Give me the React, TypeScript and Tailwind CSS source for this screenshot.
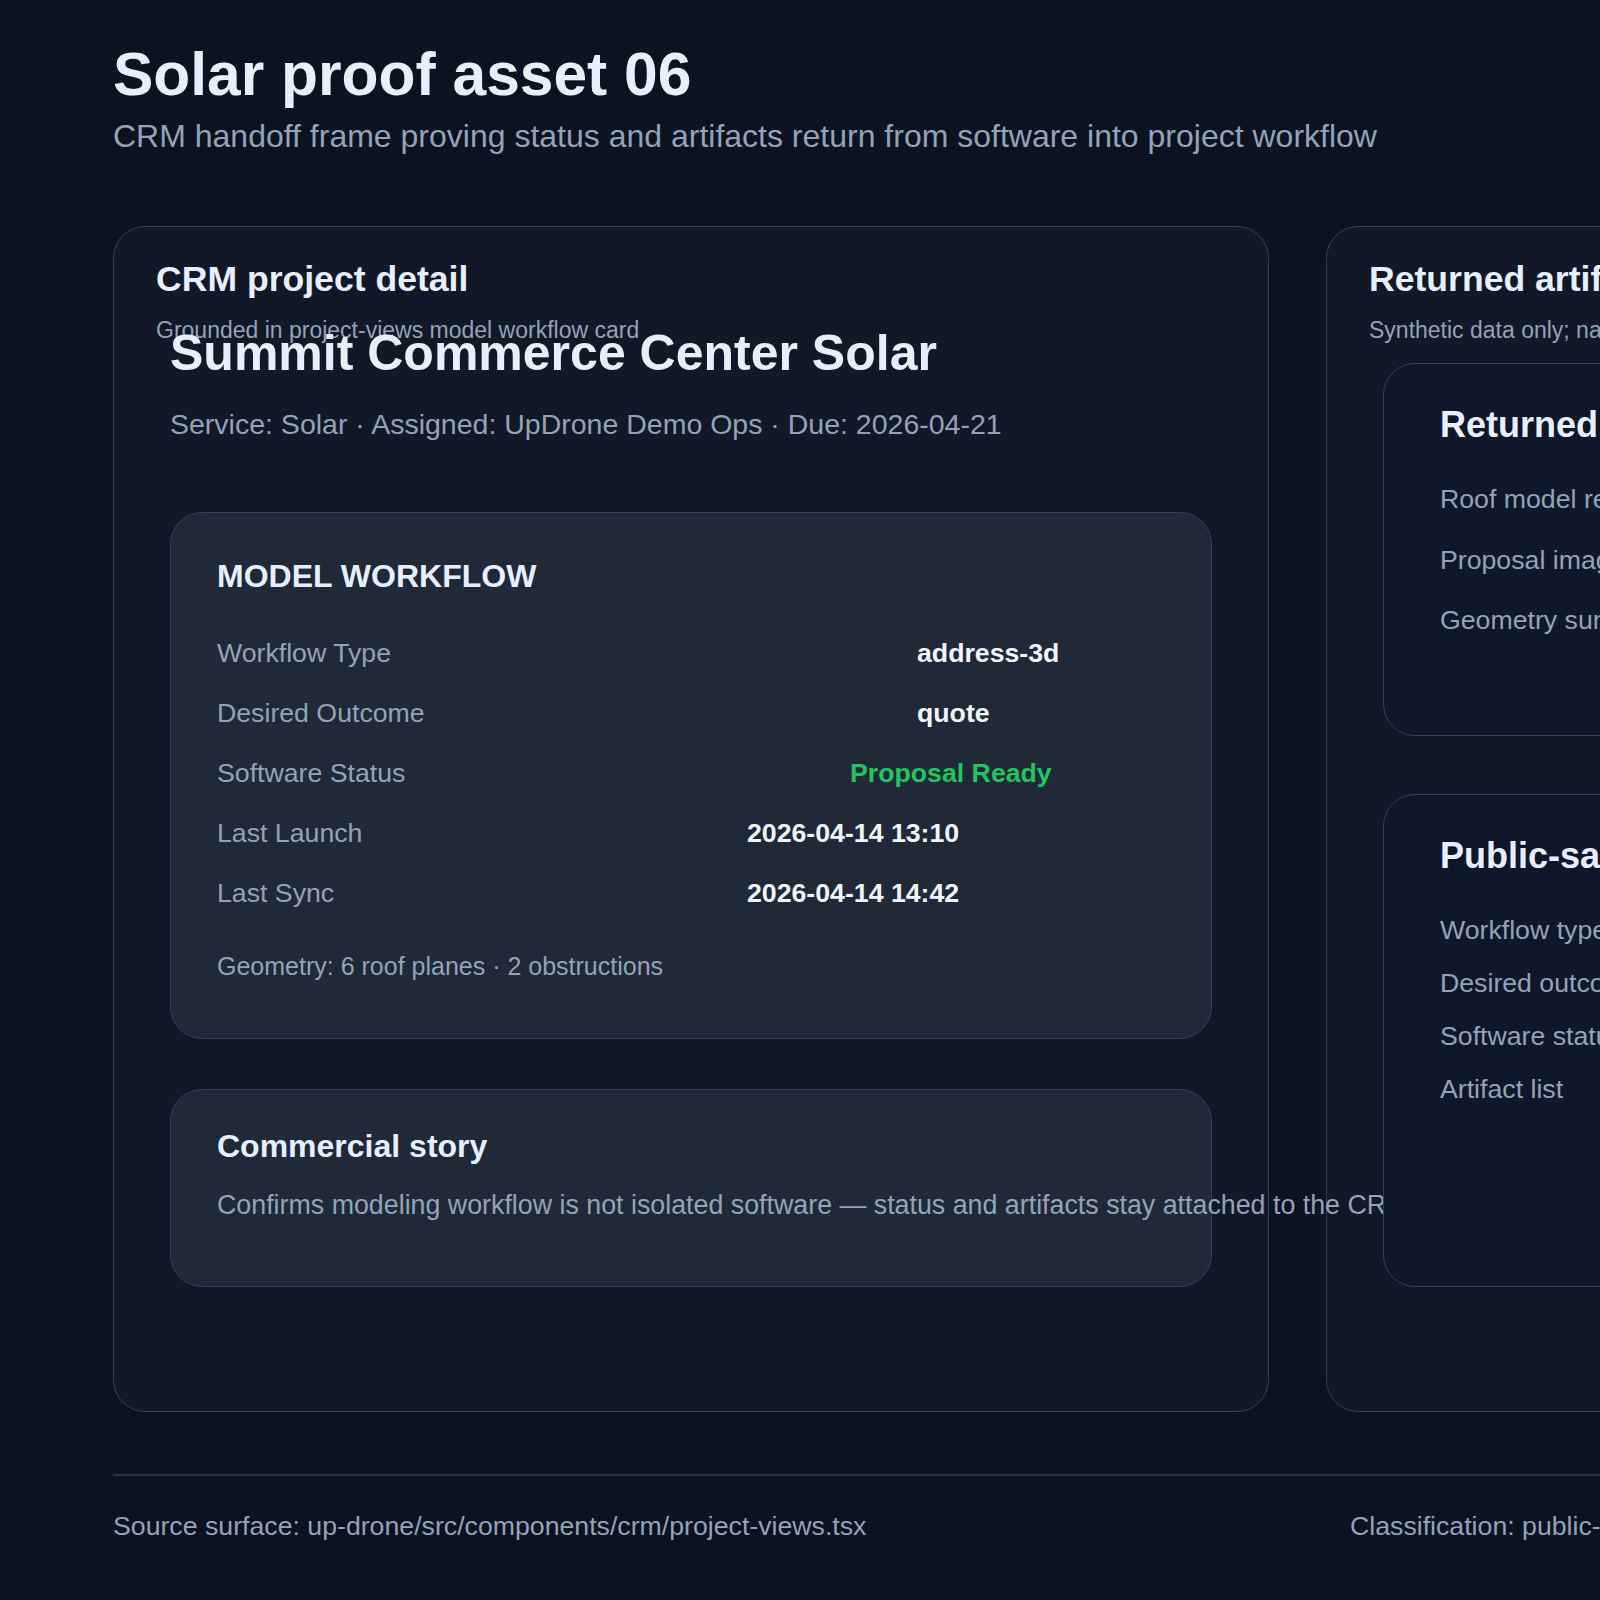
const rows = [
  { label: "Workflow Type", value: "address-3d", labelWidth: "w-[700px]", tone: "text-[#f1f5f9]" },
  { label: "Desired Outcome", value: "quote", labelWidth: "w-[700px]", tone: "text-[#f1f5f9]" },
  { label: "Software Status", value: "Proposal Ready", labelWidth: "w-[633px]", tone: "text-[#22c55e]" },
  { label: "Last Launch", value: "2026-04-14 13:10", labelWidth: "w-[530px]", tone: "text-[#f1f5f9]" },
  { label: "Last Sync", value: "2026-04-14 14:42", labelWidth: "w-[530px]", tone: "text-[#f1f5f9]" },
];

const returnedArtifacts = ["Roof model report", "Proposal imagery", "Geometry summary"];
const publicFields = ["Workflow type", "Desired outcome", "Software status", "Artifact list"];

function CardHeader({ title, note }: { title: string; note: string }) {
  return (
    <div className="px-[42px] pt-[30px]">
      <h2 className="whitespace-nowrap text-[35.6px] font-bold leading-[44px] text-[#e8effc]">{title}</h2>
      <p className="mt-[15px] whitespace-nowrap text-[23px] leading-[28px] text-[#94a3b8]">{note}</p>
    </div>
  );
}

export default function App() {
  return (
    <div className="h-[1600px] w-full overflow-hidden bg-[#0b1220] font-['Liberation_Sans',Arial,sans-serif]">
      <div className="w-[1920px] px-[113px] pt-[44px]">
        <h1 className="text-[60.5px] font-bold leading-[60px] text-[#e8effc]">Solar proof asset 06</h1>
        <p className="mt-[13px] text-[32px] leading-[38px] text-[#94a3b8]">
          CRM handoff frame proving status and artifacts return from software into project workflow
        </p>

        <div className="mt-[71px] grid grid-cols-[1156px_482px] gap-x-[57px]">
          {/* left: crm project detail */}
          <section className="flex flex-col rounded-[32px] border border-[#334155] bg-[#111827]">
            <CardHeader title="CRM project detail" note="Grounded in project-views model workflow card" />
            <div className="-mt-[21px] px-[56px] pb-[124px]">
              <h3 className="whitespace-nowrap text-[50px] font-bold leading-[60px] text-[#e8effc]">
                Summit Commerce Center Solar
              </h3>
              <p className="mt-[23px] whitespace-nowrap text-[28.5px] leading-[36px] text-[#94a3b8]">
                Service: Solar · Assigned: UpDrone Demo Ops · Due: 2026-04-21
              </p>

              <div className="mt-[70px] rounded-[32px] border border-[#334155] bg-[#1f2937] px-[46px] pb-[56px] pt-[44px]">
                <h4 className="text-[32px] font-bold leading-[38px] text-[#e8effc]">MODEL WORKFLOW</h4>
                <div className="mt-[28px]">
                  {rows.map((row) => (
                    <div key={row.label} className="flex text-[26.7px] leading-[60px]">
                      <span className={`${row.labelWidth} shrink-0 text-[#94a3b8]`}>{row.label}</span>
                      <span className={`font-bold ${row.tone}`}>{row.value}</span>
                    </div>
                  ))}
                </div>
                <p className="mt-[27px] text-[25px] leading-[32px] text-[#94a3b8]">
                  Geometry: 6 roof planes · 2 obstructions
                </p>
              </div>

              <div className="mt-[50px] rounded-[32px] border border-[#334155] bg-[#1f2937] px-[46px] pb-[63px] pt-[37px]">
                <h4 className="text-[32px] font-bold leading-[38px] text-[#e8effc]">Commercial story</h4>
                <p className="relative mt-[22px] whitespace-nowrap text-[26.8px] leading-[36px] text-[#94a3b8]">
                  Confirms modeling workflow is not isolated software — status and artifacts stay attached to the CRM
                  project record.
                </p>
              </div>
            </div>
          </section>

          {/* right: returned artifacts */}
          <section className="flex flex-col rounded-[32px] border border-[#334155] bg-[#111827]">
            <CardHeader
              title="Returned artifacts"
              note="Synthetic data only; names, addresses and figures are fictional"
            />
            <div className="mt-[19px] flex flex-1 flex-col gap-[58px] px-[56px] pb-[124px]">
              <div className="relative rounded-[32px] border border-[#334155] bg-[#0f172a] px-[56px] pb-[84px] pt-[39px]">
                <h4 className="whitespace-nowrap text-[36px] font-bold leading-[44px] text-[#e8effc]">
                  Returned artifacts
                </h4>
                <ul className="mt-[22px]">
                  {returnedArtifacts.map((item) => (
                    <li key={item} className="whitespace-nowrap text-[26.7px] leading-[60.5px] text-[#94a3b8]">
                      {item}
                    </li>
                  ))}
                </ul>
              </div>

              <div className="relative flex-1 rounded-[32px] border border-[#334155] bg-[#0f172a] px-[56px] pt-[39px]">
                <h4 className="whitespace-nowrap text-[36px] font-bold leading-[44px] text-[#e8effc]">
                  Public-safe fields
                </h4>
                <ul className="mt-[26px]">
                  {publicFields.map((item) => (
                    <li key={item} className="whitespace-nowrap text-[26.7px] leading-[53px] text-[#94a3b8]">
                      {item}
                    </li>
                  ))}
                </ul>
              </div>
            </div>
          </section>
        </div>

        <div className="mt-[62px] h-[2px] bg-[#253144]" />
        <footer className="mt-[33px] grid grid-cols-[1237px_1fr] text-[26.7px] leading-[34px] text-[#94a3b8]">
          <span className="whitespace-nowrap">Source surface: up-drone/src/components/crm/project-views.tsx</span>
          <span className="whitespace-nowrap">Classification: public-safe synthetic proof</span>
        </footer>
      </div>
    </div>
  );
}
